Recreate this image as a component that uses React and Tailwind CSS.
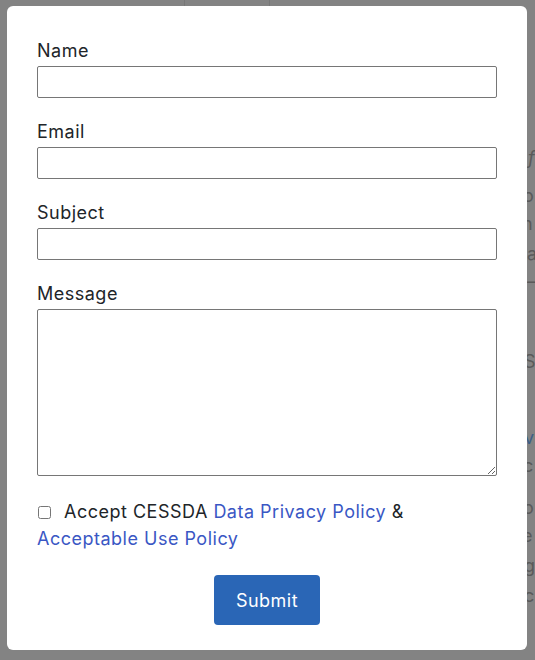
import React from "react";

const Field = ({ label, area }) => (
    <div className="mb-[22px]">
        <label className="block text-[18px] leading-[23px] mb-[4px] tracking-[0.5px] text-[#212529]">{label}</label>
        {area ? (
            <textarea className="block w-full h-[167px] border border-[#767676] rounded-[2px] bg-white" />
        ) : (
            <input type="text" className="block w-full h-[32px] border border-[#767676] rounded-[2px] bg-white" />
        )}
    </div>
);

// letters of the page behind the overlay, clipped by the modal edge
const Behind = () => (
    <div className="w-[8px] overflow-hidden text-[18px] leading-[20px] text-[#5a5a5a] whitespace-nowrap">
        <div className="mt-[148px] ml-[1px] italic">f</div>
        <div className="mt-[18px] -ml-[4px]">o</div>
        <div className="mt-[8px] -ml-[5px]">n</div>
        <div className="mt-[10px] ml-[0px]">a</div>
        <div className="mt-[8px] ml-[0px]">–</div>
        <div className="mt-[60px] -ml-[3px]">S</div>
        <div className="mt-[56px] -ml-[3px] text-[#3d5f86]">v</div>
        <div className="mt-[8px] -ml-[4px]">c</div>
        <div className="mt-[22px] -ml-[4px]">o</div>
        <div className="mt-[8px] -ml-[5px]">e</div>
        <div className="mt-[10px] -ml-[3px]">g</div>
        <div className="mt-[10px] -ml-[3px]">c</div>
    </div>
);

export default function App() {
    return (
        <div className="w-[535px] h-[660px] bg-[#838383] overflow-hidden flex font-['Inter','Liberation_Sans',sans-serif]">
            <div className="w-[7px]" />
            <div className="flex flex-col">
                <div className="h-[6px] flex">
                    <div className="w-[177px]" />
                    <div className="w-px bg-[#777]" />
                    <div className="w-[84px]" />
                    <div className="w-px bg-[#777]" />
                </div>
                <div className="relative z-10 w-[520px] h-[644px] bg-white rounded-[6px] px-[30px] pt-[33px]">
                    <form>
                        <Field label="Name" />
                        <Field label="Email" />
                        <Field label="Subject" />
                        <Field label="Message" area />
                        <div className="text-[18px] leading-[27px] tracking-[0.5px] text-[#212529]">
                            <input type="checkbox" className="w-[13px] h-[13px] ml-[1px] mr-[13px] align-[-1px]" />
                            Accept CESSDA <a className="text-[#3a57c4]">Data Privacy Policy</a> &amp;{" "}
                            <a className="text-[#3a57c4]">Acceptable Use Policy</a>
                        </div>
                        <div className="flex justify-center mt-[23px]">
                            <button type="button" className="h-[50px] w-[106px] rounded-[4px] bg-[#2a66b6] text-white text-[18px] tracking-[0.5px]">
                                Submit
                            </button>
                        </div>
                    </form>
                </div>
            </div>
            <Behind />
        </div>
    );
}
